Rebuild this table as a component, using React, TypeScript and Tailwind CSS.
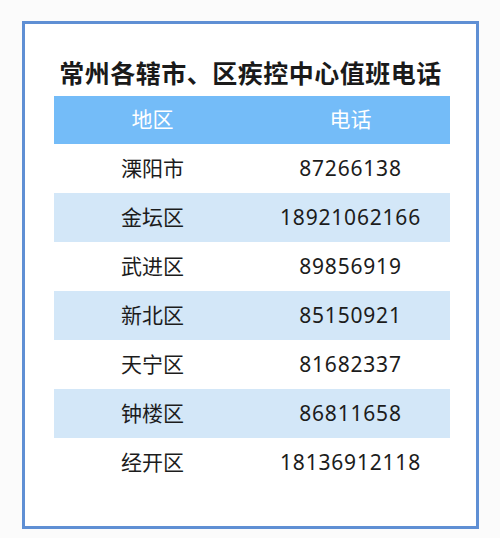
import React from 'react';

const rows = [
  { area: '溧阳市', phone: '87266138' },
  { area: '金坛区', phone: '18921062166' },
  { area: '武进区', phone: '89856919' },
  { area: '新北区', phone: '85150921' },
  { area: '天宁区', phone: '81682337' },
  { area: '钟楼区', phone: '86811658' },
  { area: '经开区', phone: '18136912118' },
];

const App = () => {
  return (
    <div
      className="w-[500px] h-[538px] bg-[#fbfbfb] pt-[21px] pl-[22px]"
      style={{ fontFamily: '"Noto Sans", "Noto Sans CJK SC", sans-serif' }}
    >
      <div className="w-[457px] h-[508px] border-[3px] border-[#5f8fd4] bg-white flex flex-col items-center pt-[30px]">
        <h1 className="text-[25px] leading-[38px] font-bold text-[#1a1a1a] tracking-[0.5px]">
          常州各辖市、区疾控中心值班电话
        </h1>
        <div className="w-[396px] mt-[4px] ml-[2px]">
          <div className="grid grid-cols-2 h-[48px] bg-[#74bcf8] text-white text-[21px] items-center text-center">
            <div>地区</div>
            <div>电话</div>
          </div>
          {rows.map((r, i) => (
            <div
              key={r.area}
              className={
                i % 2 === 1
                  ? 'grid grid-cols-2 h-[49px] bg-[#d3e7f8] text-[21px] text-[#1c1c1c] items-center text-center'
                  : 'grid grid-cols-2 h-[49px] bg-white text-[21px] text-[#1c1c1c] items-center text-center'
              }
            >
              <div>{r.area}</div>
              <div className="tracking-[0.8px]">{r.phone}</div>
            </div>
          ))}
        </div>
      </div>
    </div>
  );
};

export default App;
